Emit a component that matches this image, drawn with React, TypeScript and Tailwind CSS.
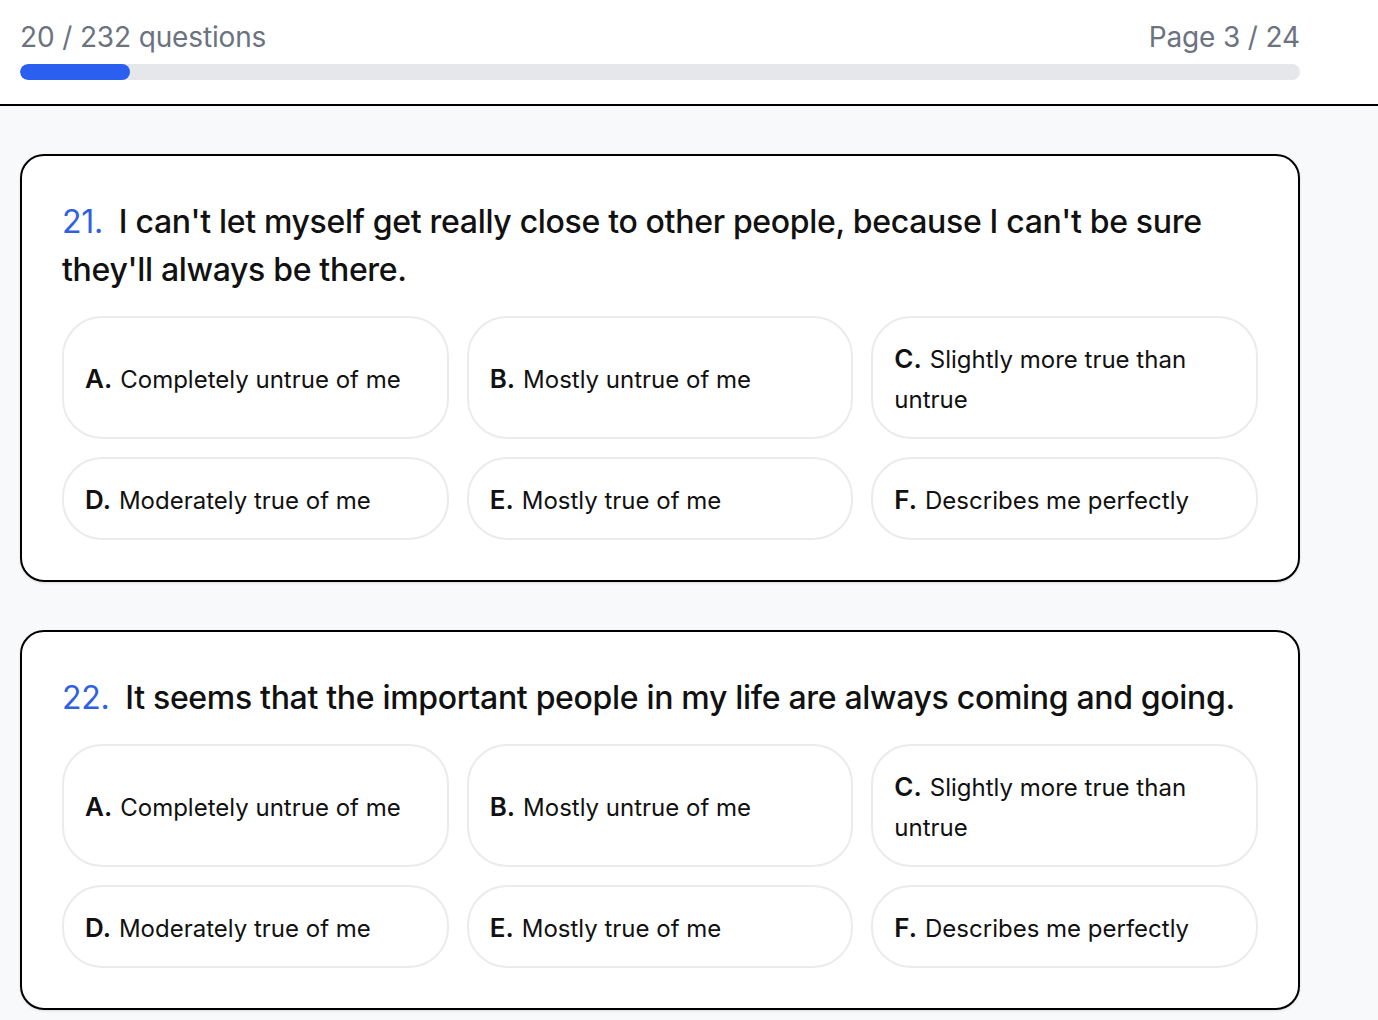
const OPTIONS = [
  { letter: 'A', text: 'Completely untrue of me' },
  { letter: 'B', text: 'Mostly untrue of me' },
  { letter: 'C', text: 'Slightly more true than untrue' },
  { letter: 'D', text: 'Moderately true of me' },
  { letter: 'E', text: 'Mostly true of me' },
  { letter: 'F', text: 'Describes me perfectly' },
];

const QUESTIONS = [
  { n: 21, text: "I can't let myself get really close to other people, because I can't be sure they'll always be there." },
  { n: 22, text: 'It seems that the important people in my life are always coming and going.' },
];

const answered = 20;
const total = 232;

export default function App() {
  return (
    <div
      className="min-h-screen bg-[#f8f9fb] text-[#111111]"
      style={{ fontFamily: 'Inter, "Open Sans", sans-serif' }}
    >
      <header className="bg-white border-b-2 border-black">
        <div className="w-[1280px] ml-5 pt-[19px] pb-6">
          <div className="flex items-center justify-between text-[28px] leading-[36px] text-[#6b7280] tracking-[-0.005em]">
            <span>
              {answered} / {total} questions
            </span>
            <span>Page 3 / 24</span>
          </div>
          <div className="mt-[9px] h-4 rounded-full bg-[#e5e7eb] overflow-hidden">
            <div
              className="h-full rounded-full bg-[#2b5ff0]"
              style={{ width: `${(answered / total) * 100}%` }}
            />
          </div>
        </div>
      </header>

      <main className="w-[1280px] ml-5 pt-12 flex flex-col gap-[48px]">
        {QUESTIONS.map((q) => (
          <section
            key={q.n}
            className="bg-white border-2 border-black rounded-3xl shadow-sm px-10 pt-[42px] pb-10"
          >
            <h2 className="text-[32px] leading-[48px] font-medium tracking-[-0.01em]">
              <span className="text-[#2f5fe3] font-normal mr-4">{q.n}.</span>
              {q.text}
            </h2>
            <div className="mt-[22px] grid grid-cols-3 gap-[18px]">
              {OPTIONS.map((o) => (
                <button
                  key={o.letter}
                  className="text-left border-2 border-[#ebebeb] rounded-[40px] px-[21px] pt-[21px] pb-[17px] text-[24px] leading-[40px] bg-white"
                >
                  <span className="font-semibold text-[26px] leading-[40px] mr-2">{o.letter}.</span>
                  {o.text}
                </button>
              ))}
            </div>
          </section>
        ))}
      </main>
    </div>
  );
}
